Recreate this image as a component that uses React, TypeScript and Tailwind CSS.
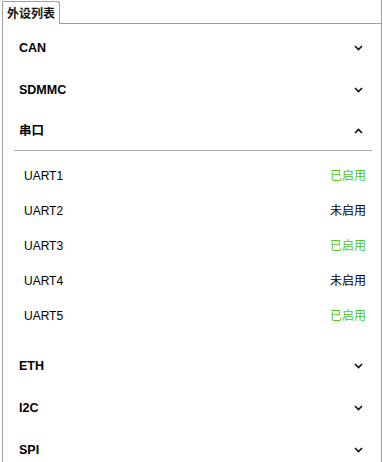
import React from "react";

const Chevron = ({ up }: { up?: boolean }) => (
  <svg width="9" height="6" viewBox="0 0 9 6" className="block">
    <path
      d={up ? "M1 5 L4.5 1.5 L8 5" : "M1 1 L4.5 4.5 L8 1"}
      fill="none"
      stroke="#111"
      strokeWidth="1.6"
    />
  </svg>
);

const Header = ({ label, up, tall }: { label: string; up?: boolean; tall?: boolean }) => (
  <div
    className={`flex items-center justify-between pl-[16px] pr-[18px] pt-[2px] ${
      tall ? "h-[40px]" : "h-[42px]"
    }`}
  >
    <span className="text-[12.5px] font-bold text-black">{label}</span>
    <Chevron up={up} />
  </div>
);

const uarts = [
  { name: "UART1", on: true },
  { name: "UART2", on: false },
  { name: "UART3", on: true },
  { name: "UART4", on: false },
  { name: "UART5", on: true },
];

export default function App() {
  return (
    <div className="w-[383px] h-[462px] overflow-hidden bg-white font-['Liberation_Sans','Noto_Sans_CJK_SC',sans-serif]">
      <div className="w-[382px] h-full border-r border-[#a0a0a0] flex flex-col pl-[2px]">
        <div className="flex h-[24px] shrink-0">
          <div className="mt-[1px] h-[23px] w-[58px] border-l border-t border-r border-[#a0a0a0] rounded-tr-[3px] pl-[4px] pt-[2px] text-[12px] font-bold text-[#111] leading-[20px]">
            外设列表
          </div>
          <div className="flex-1 border-b border-[#a0a0a0]" />
        </div>
        <div className="flex-1 border-l border-[#a0a0a0] pt-[2px]">
          <Header label="CAN" />
          <Header label="SDMMC" />
          <Header label="串口" up tall />
          <div className="ml-[11px] mr-[9px] h-px bg-[#a8a8a8]" />
          <div className="pt-[6px] pb-[12px]">
            {uarts.map((u) => (
              <div key={u.name} className="h-[35px] flex items-center justify-between pl-[21px] pr-[15px] pt-[3px]">
                <span className="text-[12px] text-black">{u.name}</span>
                <span className={`text-[12px] ${u.on ? "text-[#52c41a]" : "text-black"}`}>
                  {u.on ? "已启用" : "未启用"}
                </span>
              </div>
            ))}
          </div>
          <Header label="ETH" />
          <Header label="I2C" />
          <Header label="SPI" />
        </div>
      </div>
    </div>
  );
}
